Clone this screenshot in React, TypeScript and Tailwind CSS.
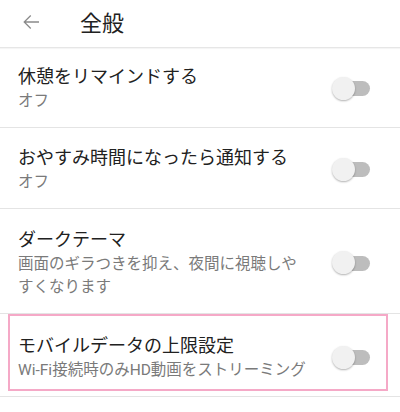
import React from 'react';

type Setting = {
  title: string;
  sub: React.ReactNode;
  pad: string;
  nowrap?: boolean;
  highlight?: boolean;
};

const settings: Setting[] = [
  { title: '休憩をリマインドする', sub: 'オフ', pad: 'pt-[16px] pb-[14px]' },
  { title: 'おやすみ時間になったら通知する', sub: 'オフ', pad: 'pt-[17px] pb-[14px]' },
  {
    title: 'ダークテーマ',
    sub: (
      <>
        画面のギラつきを抑え、夜間に視聴しや
        <br />
        すくなります
      </>
    ),
    pad: 'pt-[18px] pb-[14px]',
  },
  {
    title: 'モバイルデータの上限設定',
    sub: 'Wi-Fi接続時のみHD動画をストリーミング',
    pad: 'pt-[19px] pb-[14px]',
    nowrap: true,
    highlight: true,
  },
];

const Toggle = () => (
  <div className="relative w-[38px] h-[24px] shrink-0">
    <div className="absolute left-[4px] right-0 top-[4.5px] h-[15px] rounded-full bg-[#bdbdbd]" />
    <div className="absolute left-0 top-0 w-[23px] h-[23px] rounded-full bg-[#f1f1f1] shadow-[0_1px_2px_rgba(0,0,0,0.3)]" />
  </div>
);

export default function App() {
  return (
    <div
      className="w-[400px] h-[412px] bg-white overflow-hidden"
      style={{ fontFamily: 'Roboto, "Noto Sans CJK JP", sans-serif' }}
    >
      {/* Toolbar */}
      <div className="h-[48px] flex items-center border-b border-[#e6e6e6] shadow-[0_1px_1px_rgba(0,0,0,0.04)]">
        <svg width="24" height="24" viewBox="0 0 24 24" className="ml-[19px] mb-[3px] text-[#8a8a8a]">
          <path
            fill="currentColor"
            d="M20 11.2H6.9l5.3-5.3L11.3 5l-7 7 7 7 .9-.9-5.3-5.3H20z"
          />
        </svg>
        <span className="ml-[37px] text-[22px] leading-none text-[#212121]">全般</span>
      </div>

      {/* Settings list */}
      <div>
        {settings.map((s) => (
          <div key={s.title} className="relative border-b border-[#e4e4e4]">
            <div className={`flex items-center pl-[18px] pr-[30px] ${s.pad}`}>
              <div className="flex-1 min-w-0">
                <div className="text-[18px] leading-[26px] text-[#212121] whitespace-nowrap">{s.title}</div>
                <div
                  className={`text-[15.5px] leading-[23px] text-[#7a7a7a] ${s.nowrap ? 'whitespace-nowrap' : ''}`}
                >
                  {s.sub}
                </div>
              </div>
              <Toggle />
            </div>
            {s.highlight && (
              <div className="absolute left-[8px] top-0 w-[380px] h-[77px] border-2 border-[#f5a9c7] pointer-events-none" />
            )}
          </div>
        ))}
      </div>
    </div>
  );
}
